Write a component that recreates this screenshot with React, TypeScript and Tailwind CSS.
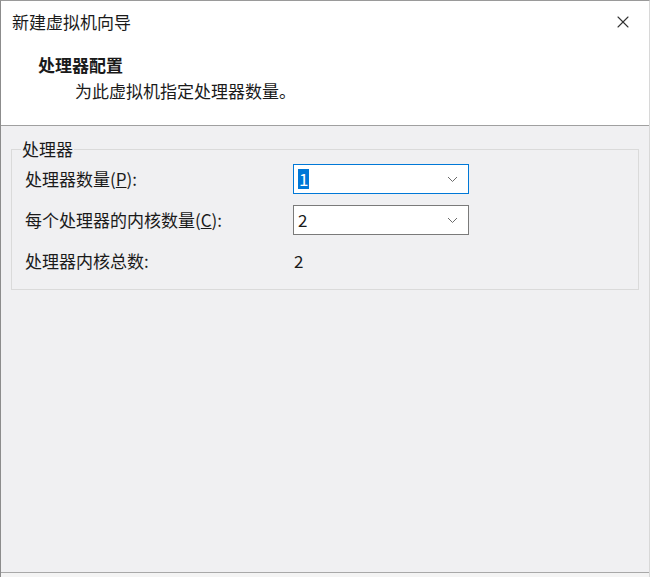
import { FiX } from "react-icons/fi";

const font = { fontFamily: '"Microsoft YaHei", "Noto Sans CJK SC", "Noto Sans", sans-serif' };

function Chevron() {
  return (
    <svg width="11" height="7" viewBox="0 0 11 7" className="shrink-0">
      <path d="M1 1 L5.5 5.5 L10 1" fill="none" stroke="#6b6b6b" strokeWidth="1" />
    </svg>
  );
}

function Combo({ value, focused }: { value: string; focused?: boolean }) {
  return (
    <div
      className={
        "flex items-center justify-between w-[176px] h-[30px] bg-white pl-[4px] pr-[10px] border " +
        (focused ? "border-[#0078d7]" : "border-[#7a7a7a]")
      }
    >
      {focused ? (
        <span className="bg-[#0078d7] text-white leading-[20px] px-[1px]">{value}</span>
      ) : (
        <span className="leading-[20px]">{value}</span>
      )}
      <Chevron />
    </div>
  );
}

export default function App() {
  return (
    <div
      style={font}
      className="w-[650px] h-[577px] bg-[#f0f0f2] border-l border-t border-r border-l-[#8c8c8c] border-t-[#9a9a9a] border-r-[#d8d8d8] flex flex-col text-[17px] text-[#1a1a1a] overflow-hidden"
    >
      <div className="bg-white h-[125px] border-b border-[#a0a0a0] shrink-0 flex flex-col">
        <div className="flex items-center justify-between h-[42px] pl-[11px] pr-[16px]">
          <span className="text-[17px]">新建虚拟机向导</span>
          <FiX className="text-[#333] w-[20px] h-[20px]" strokeWidth={1.3} />
        </div>
        <div className="pl-[37px] mt-[10px] font-bold leading-[24px]">处理器配置</div>
        <div className="pl-[74px] mt-[2px] leading-[24px]">为此虚拟机指定处理器数量。</div>
      </div>

      <div className="flex-1 flex flex-col">
        <div className="mx-[10px] mt-[23px] h-[141px] border border-[#dadada] relative">
          <span className="absolute left-[9px] -top-[13px] bg-[#f0f0f2] px-[1px] leading-[24px]">处理器</span>
          <div className="flex flex-col pl-[13px] pt-[14px]">
            <div className="flex items-center h-[30px]">
              <span className="w-[268px]">
                处理器数量(<span className="underline">P</span>):
              </span>
              <Combo value="1" focused />
            </div>
            <div className="flex items-center h-[30px] mt-[11px]">
              <span className="w-[268px]">
                每个处理器的内核数量(<span className="underline">C</span>):
              </span>
              <Combo value="2" />
            </div>
            <div className="flex items-center h-[30px] mt-[11px]">
              <span className="w-[269px]">处理器内核总数:</span>
              <span>2</span>
            </div>
          </div>
        </div>
        <div className="flex-1" />
        <div className="h-[5px] border-t border-[#a8a8a8] bg-[#f4f4f4] shrink-0" />
      </div>
    </div>
  );
}
